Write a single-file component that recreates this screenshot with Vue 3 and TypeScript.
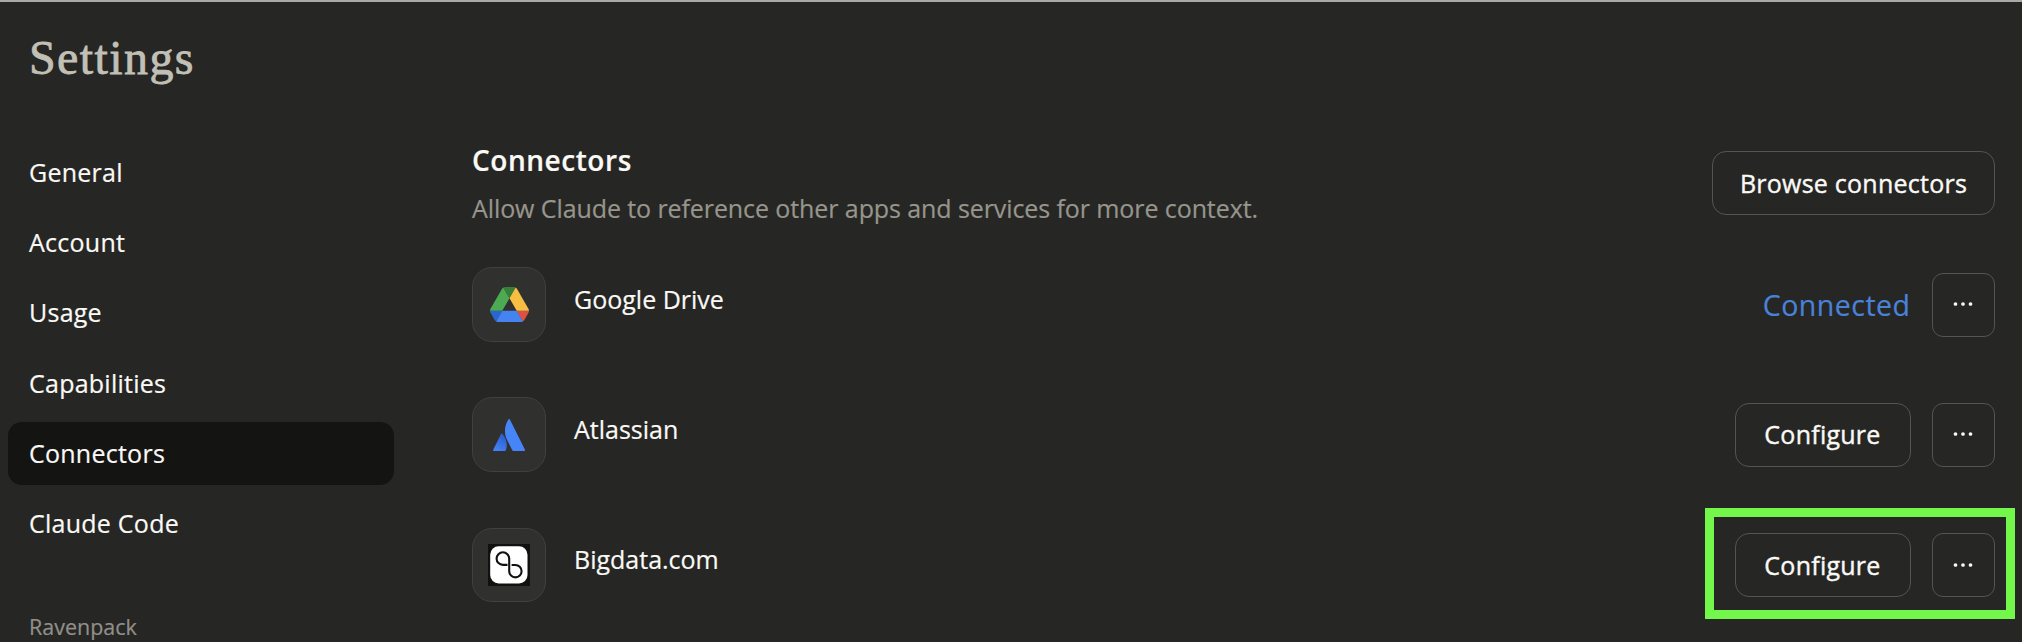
<script setup lang="ts">
interface Connector {
  id: 'drive' | 'atlassian' | 'bigdata'
  name: string
  connected: boolean
  highlighted?: boolean
}

const navItems: string[] = ['General', 'Account', 'Usage', 'Capabilities', 'Connectors', 'Claude Code']
const activeItem = 'Connectors'

const connectors: Connector[] = [
  { id: 'drive', name: 'Google Drive', connected: true },
  { id: 'atlassian', name: 'Atlassian', connected: false },
  { id: 'bigdata', name: 'Bigdata.com', connected: false, highlighted: true },
]
</script>

<template>
  <div class="page">
    <aside class="sidebar">
      <h1 class="title">Settings</h1>
      <nav class="nav">
        <a v-for="item in navItems" :key="item" class="nav-item" :class="{ active: item === activeItem }">{{ item }}</a>
      </nav>
      <div class="org">Ravenpack</div>
    </aside>

    <main class="content">
      <header class="head">
        <div>
          <h2 class="heading">Connectors</h2>
          <p class="desc">Allow Claude to reference other apps and services for more context.</p>
        </div>
        <button class="btn browse">Browse connectors</button>
      </header>

      <ul class="list">
        <li v-for="c in connectors" :key="c.id" class="row">
          <div class="tile">
            <svg v-if="c.id === 'drive'" class="drive" viewBox="0 0 87.3 78">
              <path d="m6.6 66.85 3.85 6.65c.8 1.4 1.95 2.5 3.3 3.3l13.75-23.8h-27.5c0 1.55.4 3.1 1.2 4.5z" fill="#2a66d2" />
              <path d="m43.65 25-13.75-23.8c-1.35.8-2.5 1.9-3.3 3.3l-25.4 44a9.06 9.06 0 0 0-1.2 4.5h27.5z" fill="#4cab52" />
              <path d="m73.55 76.8c1.35-.8 2.5-1.9 3.3-3.3l1.6-2.75 7.65-13.25c.8-1.4 1.2-2.95 1.2-4.5h-27.5l5.85 11.5z" fill="#dd5140" />
              <path d="m43.65 25 13.75-23.8c-1.35-.8-2.9-1.2-4.5-1.2h-18.5c-1.6 0-3.15.45-4.5 1.2z" fill="#388038" />
              <path d="m59.8 53h-32.3l-13.75 23.8c1.35.8 2.9 1.2 4.5 1.2h50.8c1.6 0 3.15-.45 4.5-1.2z" fill="#4583f0" />
              <path d="m73.4 26.5-12.7-22c-.8-1.4-1.95-2.5-3.3-3.3l-13.75 23.8 16.15 28h27.45c0-1.55-.4-3.1-1.2-4.5z" fill="#f6be42" />
            </svg>
            <svg v-else-if="c.id === 'atlassian'" class="atlassian" viewBox="0 0 32 32">
              <defs>
                <linearGradient id="leaf" x1="13" y1="17" x2="5" y2="31" gradientUnits="userSpaceOnUse">
                  <stop offset="0" stop-color="#2a5ccb" />
                  <stop offset="1" stop-color="#4380f6" />
                </linearGradient>
              </defs>
              <path d="M9.6 15C9.1 14.4 8.3 14.5 8 15.1L.1 30.9c-.3.6.1 1.1.7 1.1h11c.4 0 .7-.2.9-.5C15 26.6 13.5 19.2 9.6 15z" fill="url(#leaf)" />
              <path d="M15.3.6C10.9 7.6 11.2 15.3 14.1 21.1l5.3 10.4c.2.3.5.5.9.5h11c.6 0 1-.6.7-1.2L16.9.6C16.5-.2 15.7-.2 15.3.6z" fill="#4684f8" />
            </svg>
            <svg v-else class="bigdata" viewBox="0 0 42 42">
              <rect width="42" height="42" fill="#111110" />
              <rect x="2.2" y="2.2" width="37.3" height="37.3" rx="8.5" fill="#fff" />
              <path d="M19.5 20.9H15A6.3 6.3 0 1 1 21.2 14.6V27.2A6.200 6.200 0 1 0 27.400 21H23.600" fill="none" stroke="#111110" stroke-width="2.100" />
            </svg>
          </div>
          <span class="name">{{ c.name }}</span>
          <div class="actions">
            <span v-if="c.connected" class="status">Connected</span>
            <button v-else class="btn configure">Configure</button>
            <button class="btn more" aria-label="More">
              <svg width="20" height="6" viewBox="0 0 20 6">
                <circle cx="2.5" cy="3" r="1.850" />
                <circle cx="10" cy="3" r="1.850" />
                <circle cx="17.5" cy="3" r="1.850" />
              </svg>
            </button>
            <div v-if="c.highlighted" class="marker"></div>
          </div>
        </li>
      </ul>
    </main>
  </div>
</template>

<style>
body {
  margin: 0;
  background: #262624;
}
</style>

<style scoped>
.page {
  box-sizing: border-box;
  width: 2022px;
  height: 642px;
  overflow: hidden;
  display: flex;
  background: #262624;
  border-top: 2px solid #a9aaa6;
  color: #faf9f5;
  font-family: "Open Sans", "Noto Sans", sans-serif;
  font-size: 25px;
  -webkit-text-stroke: 0.2px currentColor;
}
.sidebar {
  width: 386px;
  padding-left: 8px;
  flex: none;
}
.title {
  margin: 26px 0 0 21px;
  height: 60px;
  line-height: 60px;
  font-family: "Liberation Serif", serif;
  font-size: 48px;
  font-weight: 400;
  letter-spacing: 1.4px;
  color: #c2c0b6;
  -webkit-text-stroke: 0.8px #c2c0b6;
}
.nav {
  margin-top: 52.7px;
  display: flex;
  flex-direction: column;
  gap: 7px;
}
.nav-item {
  height: 63.33px;
  line-height: 63px;
  padding-left: 21px;
  border-radius: 14px;
  letter-spacing: 0.25px;
}
.nav-item.active {
  background: #141413;
}
.org {
  margin-top: 55px;
  padding-left: 21px;
  font-size: 21.5px;
  line-height: 32px;
  color: #91908a;
}
.content {
  margin-left: 78px;
  width: 1523px;
}
.head {
  box-sizing: border-box;
  display: flex;
  justify-content: space-between;
  padding-top: 141px;
  height: 265px;
}
.heading {
  margin: 0;
  font-size: 28px;
  line-height: 34px;
  font-weight: 600;
  letter-spacing: 0.55px;
}
.desc {
  margin: 14px 0 0;
  line-height: 34px;
  letter-spacing: -0.09px;
  color: #97958c;
  white-space: nowrap;
}
.btn {
  box-sizing: border-box;
  height: 64px;
  padding: 0 0 1px;
  display: flex;
  align-items: center;
  justify-content: center;
  border: 1px solid #545451;
  border-radius: 14px;
  background: transparent;
  color: #faf9f5;
  font-family: inherit;
  font-size: 25px;
  font-weight: 500;
  letter-spacing: 0.25px;
  -webkit-text-stroke: 0.4px currentColor;
}
.browse {
  width: 283px;
  margin-top: 8px;
}
.list {
  list-style: none;
  margin: 0;
  padding: 0;
}
.row {
  height: 130.3px;
  display: flex;
  align-items: flex-start;
}
.tile {
  box-sizing: border-box;
  width: 74px;
  height: 74.5px;
  border: 1px solid #40403e;
  border-radius: 20px;
  background: #30302e;
  display: flex;
  align-items: center;
  justify-content: center;
}
.drive {
  width: 39px;
  height: 35px;
}
.atlassian {
  width: 32px;
  height: 32px;
}
.bigdata {
  width: 42px;
  height: 42px;
}
.name {
  margin: 14.6px 0 0 28px;
  line-height: 34px;
}
.actions {
  position: relative;
  margin: 5.6px 0 0 auto;
  display: flex;
  align-items: center;
  gap: 21px;
}
.status {
  font-size: 28.5px;
  letter-spacing: 0.5px;
  color: #4a82d8;
}
.configure {
  width: 176px;
}
.more {
  width: 63.5px;
  border-radius: 11px;
}
.more svg {
  fill: #faf9f5;
}
.marker {
  position: absolute;
  box-sizing: border-box;
  left: -30px;
  top: -25px;
  width: 310px;
  height: 111px;
  border: 9px solid #74f74b;
}
</style>
